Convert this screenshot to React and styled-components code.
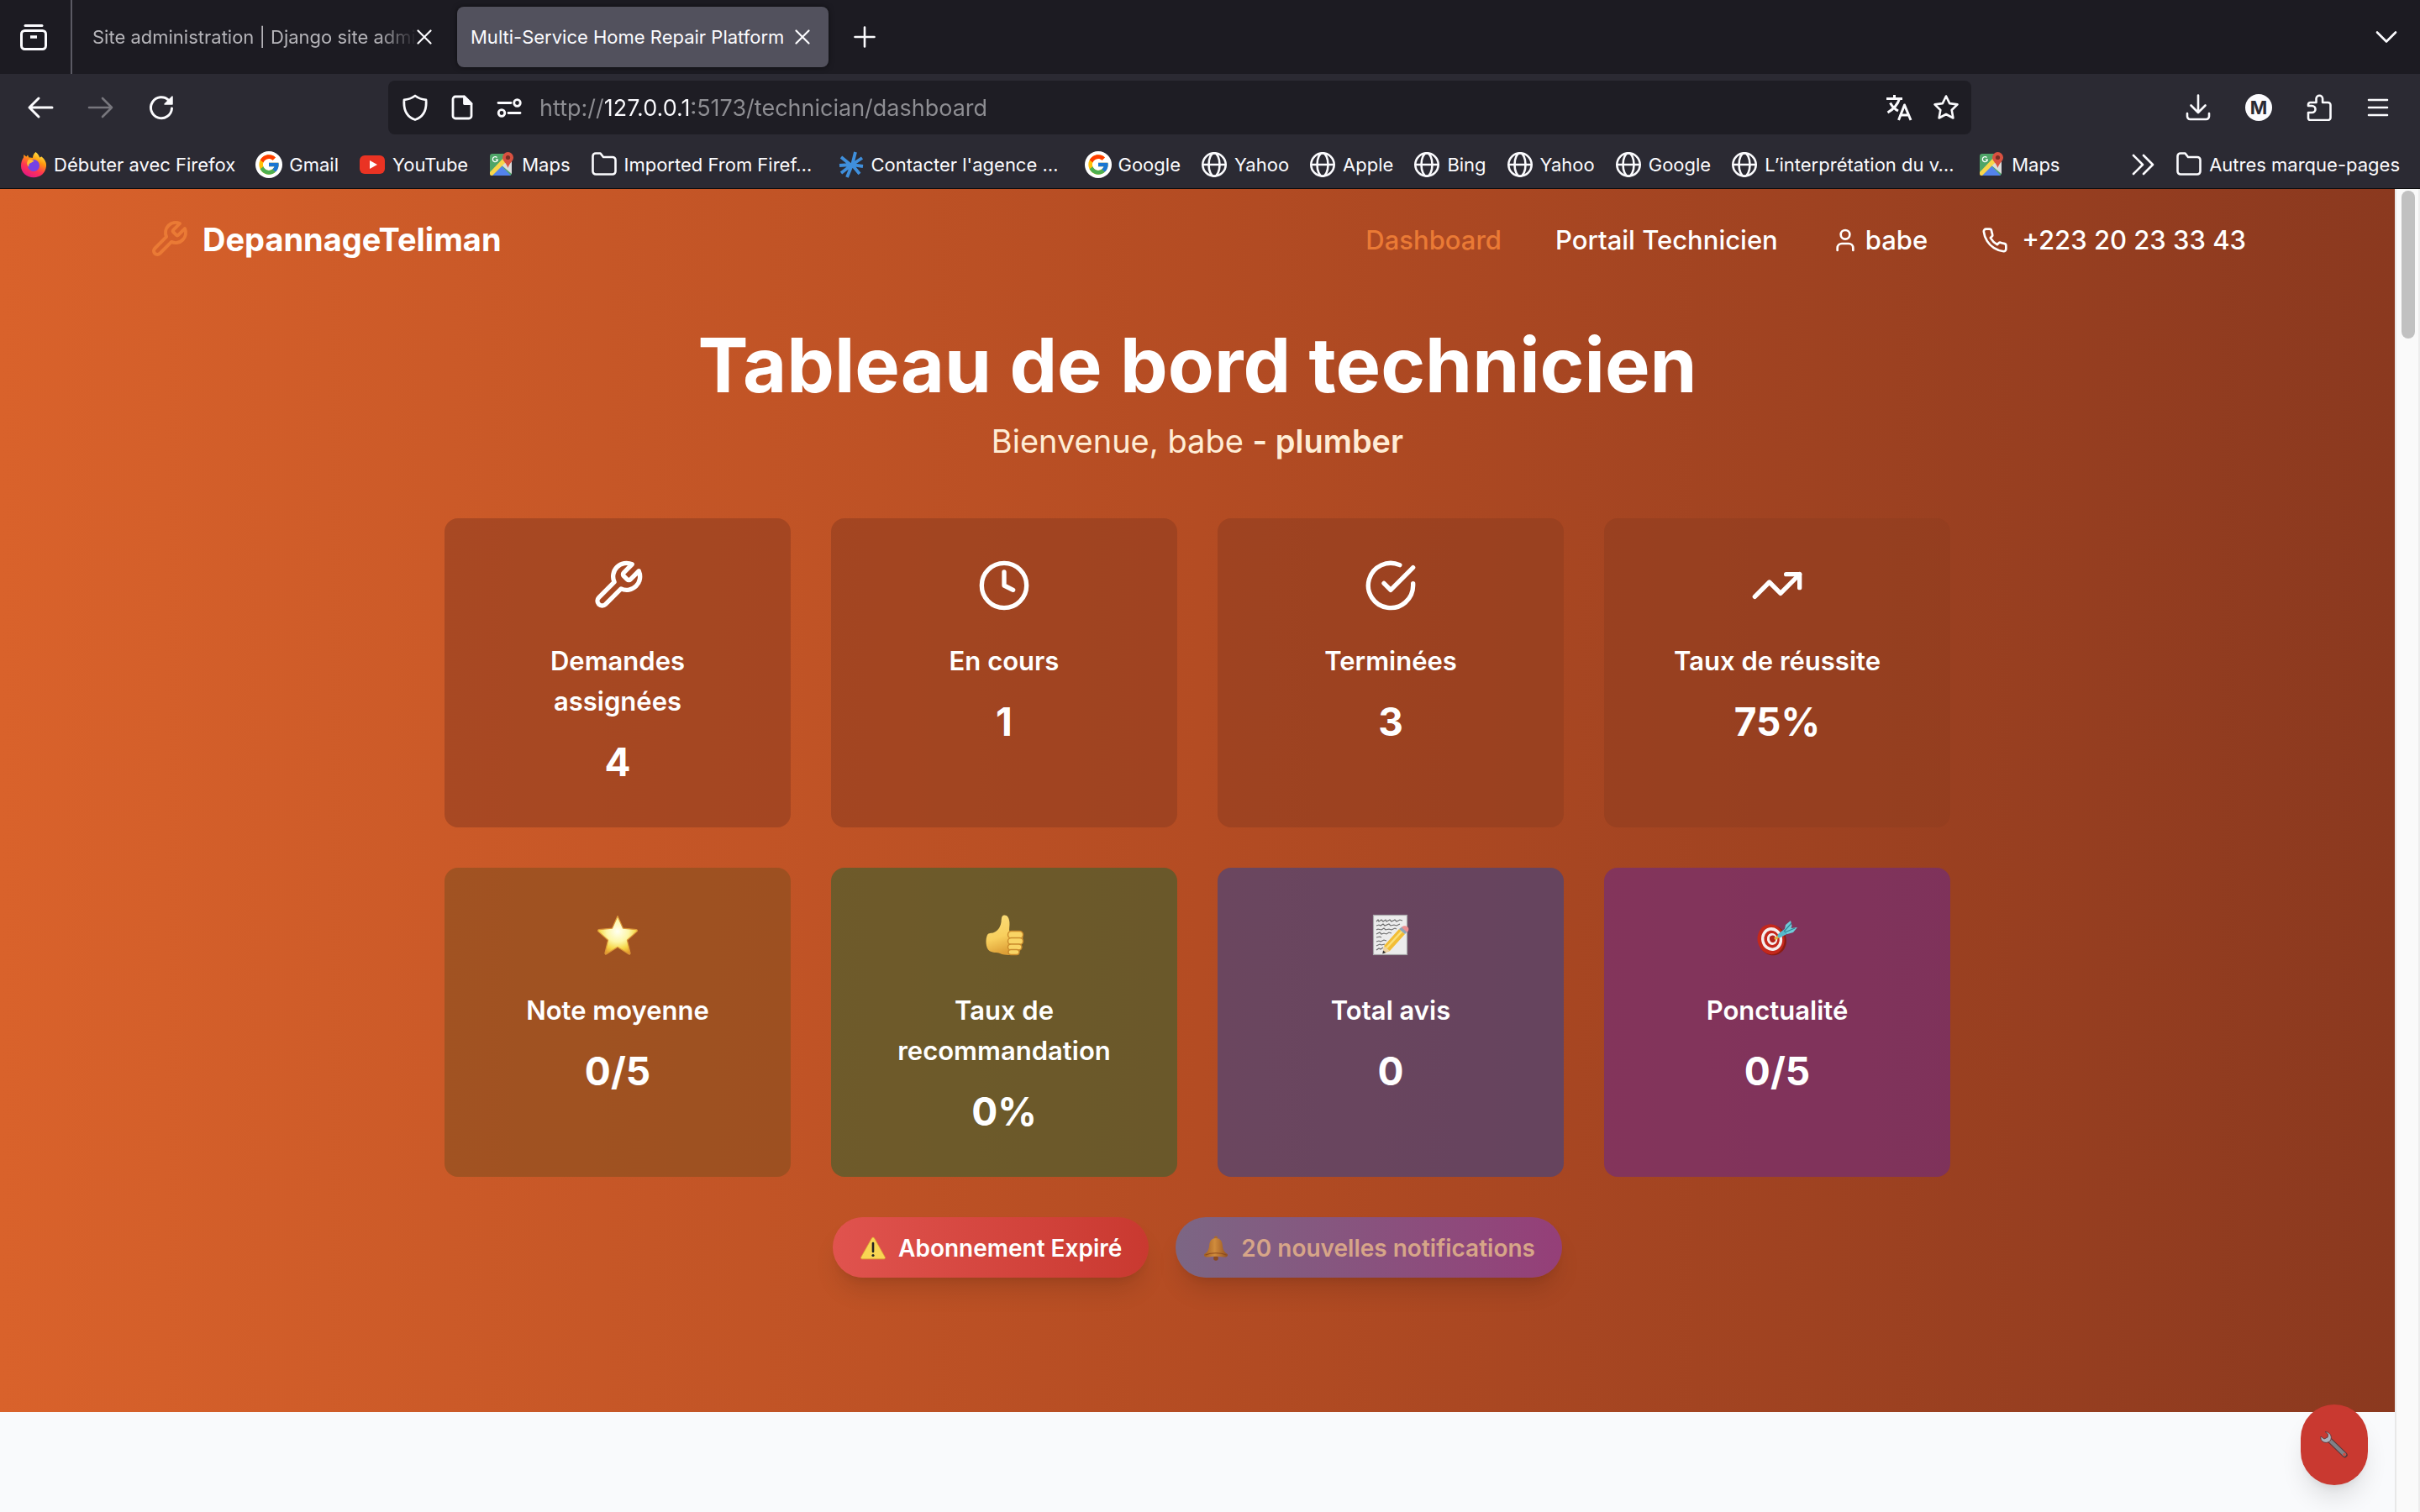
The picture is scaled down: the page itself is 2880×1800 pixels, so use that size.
import React from "react";
import styled, { createGlobalStyle } from "styled-components";
import { FcGoogle } from "react-icons/fc";

const GlobalStyle = createGlobalStyle`
  *, *::before, *::after { box-sizing: border-box; }
  body {
    margin: 0;
    font-family: Inter, "Liberation Sans", sans-serif;
    -webkit-font-smoothing: antialiased;
  }
  button, input { font: inherit; color: inherit; }
  button { border: 0; padding: 0; background: none; cursor: pointer; }
  a { color: inherit; text-decoration: none; }
  h1, h2, p { margin: 0; }
  svg { display: block; flex: none; }
`;

/* ---------- browser chrome ---------- */

const Browser = styled.div`
  display: flex;
  flex-direction: column;
  height: 100vh;
  background: #2b2a33;
  color: #fbfbfe;
`;

const TabStrip = styled.div`
  display: flex;
  align-items: center;
  height: 88px;
  padding-right: 26px;
  background: #1c1b22;
`;

const FirefoxView = styled.div`
  display: flex;
  align-items: center;
  align-self: stretch;
  padding: 0 26px 0 22px;
  border-right: 2px solid #5b5a64;
`;

const Tab = styled.div`
  display: flex;
  align-items: center;
  justify-content: space-between;
  width: 442px;
  height: 72px;
  margin-left: ${(p) => (p.$active ? "0" : "8px")};
  margin-right: ${(p) => (p.$active ? "30px" : "8px")};
  padding: 0 22px 0 16px;
  border-radius: 8px;
  background: ${(p) => (p.$active ? "#52515d" : "transparent")};
  box-shadow: ${(p) => (p.$active ? "0 0 6px rgba(0, 0, 0, 0.5)" : "none")};
`;

const TabTitle = styled.button`
  flex: 1;
  min-width: 0;
  overflow: hidden;
  white-space: nowrap;
  text-align: left;
  font-size: 22px;
  line-height: 32px;
  color: ${(p) => (p.$active ? "#fbfbfe" : "#b5b4b9")};
  mask-image: ${(p) => (p.$active ? "none" : "linear-gradient(to right, #000 88%, transparent)")};
`;

const Spacer = styled.div`
  flex: 1;
`;

const NavBar = styled.div`
  display: flex;
  align-items: center;
  height: 80px;
  padding: 0 36px 0 32px;
`;

const NavGroup = styled.div`
  display: flex;
  align-items: center;
  gap: 40px;
`;

const UrlBox = styled.form`
  display: flex;
  align-items: center;
  flex: 1;
  height: 64px;
  margin: 0 254px;
  padding: 0 14px 0 16px;
  gap: 24px;
  border-radius: 8px;
  background: #1e1d24;
`;

const UrlInput = styled.input`
  flex: 1;
  min-width: 0;
  margin-left: -4px;
  padding: 2px 0 0;
  border: 0;
  outline: 0;
  font-size: 27px;
  line-height: 40px;
  color: transparent;
  background: linear-gradient(to right, #8e8e93 0 76px, #fbfbfe 76px 182px, #8e8e93 182px);
  background-clip: text;
  -webkit-background-clip: text;
`;

const Account = styled.span`
  display: flex;
  align-items: center;
  justify-content: center;
  width: 32px;
  height: 32px;
  border-radius: 50%;
  background: #fbfbfe;
  color: #2b2a33;
  font-size: 22px;
  font-weight: 700;
`;

const Bookmarks = styled.nav`
  display: flex;
  align-items: center;
  height: 57px;
  padding: 0 24px;
  border-bottom: 1px solid #0c0c0d;
  gap: 24px;
  font-size: 22px;
  line-height: 32px;
  white-space: nowrap;
`;

const Bookmark = styled.a`
  display: flex;
  align-items: center;
  gap: 8px;
  width: ${(p) => (p.$long ? "270px" : "auto")};
`;

const GoogleDisc = styled.span`
  display: flex;
  align-items: center;
  justify-content: center;
  width: 32px;
  height: 32px;
  border-radius: 50%;
  background: #fff;
`;

/* ---------- page ---------- */

const Viewport = styled.div`
  display: flex;
  flex: 1;
  min-height: 0;
`;

const Page = styled.div`
  position: relative;
  flex: 1;
  min-width: 0;
  overflow: hidden;
  background: #f9fafc;
  color: #fff;
`;

const ScrollTrack = styled.div`
  width: 30px;
  padding: 2px 6px 0 6px;
  border-left: 2px solid #e8e8e8;
  border-right: 2px solid #ededed;
  background: #fafafa;
`;

const ScrollThumb = styled.div`
  width: 16px;
  height: 176px;
  border-radius: 8px;
  background: #c1c1c1;
`;

const Hero = styled.section`
  padding-bottom: 160px;
  background: linear-gradient(to right, #d9622b, #b44c23 50%, #8b391f);
`;

const Header = styled.header`
  display: flex;
  align-items: center;
  justify-content: space-between;
  max-width: 2560px;
  height: 120px;
  margin: 0 auto;
  padding: 0 32px;
`;

const Logo = styled.a`
  display: flex;
  align-items: center;
  gap: 16px;
  font-size: 38px;
  font-weight: 700;

  svg { color: #ea7a35; }
`;

const Menu = styled.nav`
  display: flex;
  align-items: center;
  gap: 64px;
  padding-top: 2px;
`;

const MenuLink = styled.a`
  display: flex;
  align-items: center;
  gap: ${(p) => p.$gap || 8}px;
  font-size: 31px;
  line-height: 48px;
  font-weight: 500;
  color: ${(p) => (p.$active ? "#ea7a35" : "#fff")};
`;

const HeroBody = styled.div`
  display: flex;
  flex-direction: column;
  align-items: center;
  padding-top: 42px;
`;

const Title = styled.h1`
  font-size: 90px;
  line-height: 96px;
  font-weight: 700;
`;

const Subtitle = styled.p`
  margin-top: 14px;
  font-size: 38px;
  line-height: 56px;
  color: #ffedd5;

  strong { font-weight: 600; }
`;

const StatGrid = styled.div`
  display: grid;
  grid-template-columns: repeat(4, 1fr);
  gap: 48px;
  width: 100%;
  max-width: 1792px;
  margin-top: 64px;
`;

const StatCard = styled.article`
  display: flex;
  flex-direction: column;
  align-items: center;
  padding: 48px 48px 46px;
  border-radius: 16px;
  background: ${(p) => p.$tint};
  text-align: center;
`;

const StatIcon = styled.div`
  display: flex;
  align-items: center;
  justify-content: center;
  height: 64px;
  margin-bottom: 34px;
`;

const StatLabel = styled.h2`
  font-size: 31px;
  line-height: 48px;
  font-weight: 600;
`;

const StatValue = styled.p`
  margin-top: 16px;
  font-size: 46px;
  line-height: 64px;
  font-weight: 700;
`;

const Badges = styled.div`
  display: flex;
  gap: 32px;
  margin-top: 48px;
`;

const Badge = styled.button`
  display: flex;
  align-items: center;
  gap: 14px;
  padding: 17px 32px 15px;
  border-radius: 36px;
  background: ${(p) => p.$fill};
  color: ${(p) => p.$ink};
  font-size: 28px;
  line-height: 40px;
  font-weight: 600;
  box-shadow: 0 20px 30px -6px rgba(0, 0, 0, 0.12), 0 8px 12px -8px rgba(0, 0, 0, 0.12);
`;

const HelpButton = styled.button`
  position: absolute;
  right: 32px;
  bottom: 32px;
  display: flex;
  align-items: center;
  justify-content: center;
  width: 80px;
  height: 96px;
  border-radius: 40px;
  background: #c93930;
  box-shadow: 0 20px 30px -6px rgba(0, 0, 0, 0.12), 0 8px 12px -8px rgba(0, 0, 0, 0.12);
`;

/* ---------- line icons ---------- */

const Line = ({ size = 32, box = 24, w = 2, children, ...rest }) => (
  <svg width={size} height={size} viewBox={`0 0 ${box} ${box}`} fill="none" stroke="currentColor"
    strokeWidth={w} strokeLinecap="round" strokeLinejoin="round" aria-hidden="true" {...rest}>
    {children}
  </svg>
);

const Wrench = ({ size }) => (
  <Line size={size}>
    <path d="M14.7 6.3a1 1 0 0 0 0 1.4l1.6 1.6a1 1 0 0 0 1.4 0l3.77-3.77a6 6 0 0 1-7.94 7.94l-6.91 6.91a2.12 2.12 0 0 1-3-3l6.91-6.91a6 6 0 0 1 7.94-7.94l-3.76 3.76z" />
  </Line>
);
const Clock = () => (
  <Line size={64}><circle cx="12" cy="12" r="10" /><path d="M12 6v6l4 2" /></Line>
);
const Check = () => (
  <Line size={64}><path d="M22 11.08V12a10 10 0 1 1-5.93-9.14" /><path d="m9 11 3 3L22 4" /></Line>
);
const Trend = () => (
  <Line size={64}><path d="m22 7-8.5 8.5-5-5L2 17" /><path d="M16 7h6v6" /></Line>
);
const User = () => (
  <Line><path d="M19 21v-2a4 4 0 0 0-4-4H9a4 4 0 0 0-4 4v2" /><circle cx="12" cy="7" r="4" /></Line>
);
const Phone = () => (
  <Line>
    <path d="M22 16.92v3a2 2 0 0 1-2.18 2 19.79 19.79 0 0 1-8.63-3.07 19.5 19.5 0 0 1-6-6 19.79 19.79 0 0 1-3.07-8.67A2 2 0 0 1 4.11 2h3a2 2 0 0 1 2 1.72 12.84 12.84 0 0 0 .7 2.81 2 2 0 0 1-.45 2.11L8.09 9.91a16 16 0 0 0 6 6l1.27-1.27a2 2 0 0 1 2.11-.45 12.84 12.84 0 0 0 2.81.7A2 2 0 0 1 22 16.92z" />
  </Line>
);

const ViewIcon = () => (
  <Line size={36} box={36} w={3}>
    <path d="M8 4.500h20" /><rect x="3.500" y="10.500" width="29" height="22" rx="4" /><path d="M14 18h8" strokeWidth="3.500" strokeLinecap="butt" />
  </Line>
);
const Close = () => <Line size={18} box={18} w={2.2}><path d="m1.500 1.500 15 15m0-15-15 15" /></Line>;
const Plus = () => <Line size={26} box={26} w={2.6}><path d="M13 1.500v23M1.500 13h23" /></Line>;
const ChevronDown = () => <Line size={28} box={28} w={2.6}><path d="m3 8.500 11 11 11-11" /></Line>;
const Back = () => <Line box={32} w={3}><path d="M30 16H3M14 5 3 16l11 11" /></Line>;
const Forward = () => <Line box={32} w={2.6} color="#77767d"><path d="M2 16h27M18 5l11 11-11 11" /></Line>;
const Reload = () => (
  <Line box={32} w={3}>
    <path d="M28.500 17A12.500 12.500 0 1 1 25 7.500" /><path d="M29 3v9h-9z" fill="currentColor" strokeWidth="1.500" />
  </Line>
);
const Shield = () => (
  <Line box={32} w={2.8}>
    <path d="M16 2c4 3 8.500 4.500 13 4.800C30 18 26 27 16 30.500 6 27 2 18 3 6.800 7.500 6.500 12 5 16 2z" />
  </Line>
);
const Doc = () => (
  <Line box={32} w={2.8}>
    <path d="M8 3h10.500L27 11.500V26a3 3 0 0 1-3 3H8a3 3 0 0 1-3-3V6a3 3 0 0 1 3-3z" /><path d="M18.500 3v8.500H27z" fill="currentColor" />
  </Line>
);
const Sliders = () => (
  <Line box={32} w={2.8}>
    <path d="M3 10.500h15" /><circle cx="25.500" cy="10.500" r="3.800" /><path d="M29 22.500H15" /><circle cx="7" cy="22.500" r="3.800" />
  </Line>
);
const Translate = () => (
  <Line box={32} w={3} strokeLinecap="butt">
    <path d="M1 5.500h19M10.500 1v4.500M16.500 5.500C14.500 12.500 10 17.500 2.500 22M5.500 10.500c2.500 4.500 5.500 7.500 9.500 9.500" /><path d="m15.500 31 7-18 7.500 18M18 25h9.500" />
  </Line>
);
const Star = () => (
  <Line box={32} w={2.6}>
    <path d="m16 2.500 4.200 8.600 9.300 1.300-6.800 6.600 1.700 9.500L16 24l-8.400 4.500 1.700-9.500-6.800-6.600 9.300-1.300z" />
  </Line>
);
const Download = () => <Line box={32} w={2.6}><path d="M16 1.500v20M7.500 13.500l8.500 8.500 8.500-8.500M3 23v3.500A3.500 3.500 0 0 0 6.500 30h19a3.500 3.500 0 0 0 3.500-3.500V23" /></Line>;
const Puzzle = () => (
  <Line box={32} w={2.6}>
    <path d="M5.500 10h7V5.500a3.800 3.800 0 0 1 7.600 0V10h6.400a3 3 0 0 1 3 3v15a3 3 0 0 1-3 3h-21a2.500 2.500 0 0 1-2.500-2.500v-6.500h4.500a4 4 0 0 0 0-8H3v-1.500A2.500 2.500 0 0 1 5.500 10z" />
  </Line>
);
const Burger = () => <Line size={28} box={28} w={2.6}><path d="M3 5h22M3 14h22M3 23h22" /></Line>;
const Chevrons = () => <Line size={28} box={28} w={2.6}><path d="m2 3 11 11L2 25M14 3l11 11-11 11" /></Line>;
const Folder = () => (
  <Line box={32} w={2.6}>
    <path d="M2.500 6A3.500 3.500 0 0 1 6 2.500h5.500L15 7h11a3.500 3.500 0 0 1 3.500 3.500V24a3.500 3.500 0 0 1-3.500 3.500H6A3.500 3.500 0 0 1 2.500 24z" />
  </Line>
);
const Globe = () => (
  <Line box={32} w={2.6}>
    <circle cx="16" cy="16" r="13.700" /><ellipse cx="16" cy="16" rx="6.500" ry="13.700" /><path d="M2.500 16h27" />
  </Line>
);

/* ---------- coloured marks ---------- */

const Firefox = () => (
  <svg width="32" height="32" viewBox="0 0 32 32" aria-hidden="true">
    <defs>
      <linearGradient id="ffBody" x1="0.800" y1="0" x2="0.300" y2="1">
        <stop offset="0" stopColor="#fff44f" /><stop offset="0.350" stopColor="#ff980e" />
        <stop offset="0.650" stopColor="#ff3750" /><stop offset="1" stopColor="#e31587" />
      </linearGradient>
    </defs>
    <path d="M18.500 1c3 2.500 4.200 4.500 4.600 6.500 1.400-.2 2-1.300 2-1.300C29.500 9.500 31.500 13.500 31 18c-.8 8-7 13.300-15 13.300S1 25.500 1 17.500C1 13.500 2.200 10 4 7.500L4.300 4l3 2.500L9 4.500l1.500 3c2 0 4 .3 4.500.5C15 5 16.500 2.500 18.500 1z" fill="url(#ffBody)" />
    <circle cx="16" cy="17" r="7" fill="#7542e5" />
    <path d="M10 10c3-.5 5 .5 6.500 2-2 .5-2.500 1.500-4.500 2.200-1.500.6-2 2.300-1.500 4.300C7.500 17 7.500 12.500 10 10z" fill="#ffbd2f" />
  </svg>
);
const YouTube = () => (
  <svg width="32" height="32" viewBox="0 0 32 32" aria-hidden="true">
    <rect x="1" y="5" width="30" height="22" rx="6" fill="#ea3323" /><path d="m13 11 9 5-9 5z" fill="#fff" />
  </svg>
);
const MapsMark = () => (
  <svg width="32" height="32" viewBox="0 0 32 32" aria-hidden="true">
    <rect x="2" y="3" width="26" height="26" rx="3" fill="#4fa568" />
    <path d="M28 10v17L15 16z" fill="#dcdcdc" /><path d="M4 29 15.500 17 27 29z" fill="#5383ec" />
    <path d="M2 25 22 4l4 4L5 29H4a2 2 0 0 1-2-2z" fill="#f8d64b" />
    <path d="M10.500 7.500a3 3 0 1 0 .8 2.600H8.800" fill="none" stroke="#fff" strokeWidth="1.300" />
    <path d="M23.500 1a6.500 6.500 0 0 1 6.500 6.500c0 4.500-5 6.500-6.500 12.500-1.500-6-6.500-8-6.500-12.500A6.500 6.500 0 0 1 23.500 1z" fill="#d85140" />
    <circle cx="23.500" cy="7.500" r="2.600" fill="#7a2e24" />
  </svg>
);
const Spark = () => (
  <Line box={32} w={3.8} color="#3f8fdc"><path d="M21 1 17.500 15 11 31M4 7l11 9M29 8l-12 8-13 10M2 17l14-1 14 2M17 16l9 11" strokeLinecap="butt" /></Line>
);
const GoogleMark = () => <GoogleDisc><FcGoogle size={28} aria-hidden="true" /></GoogleDisc>;

const StarEmoji = () => (
  <svg width="50" height="50" viewBox="0 0 50 50" aria-hidden="true">
    <defs>
      <radialGradient id="starFill" cx="0.500" cy="0.400" r="0.620">
        <stop offset="0" stopColor="#fffff2" /><stop offset="0.450" stopColor="#fdf7a8" />
        <stop offset="0.750" stopColor="#f6d748" /><stop offset="1" stopColor="#e59a2c" />
      </radialGradient>
    </defs>
    <path d="m25 2.500 6.400 14.600 15.900 1.600c1.200.2 1.600 1.400.7 2.200L36.400 31.200l3.600 15.400c.2 1.200-.8 1.800-1.800 1.200L25 39.600l-13.200 8.200c-1 .6-2 0-1.800-1.200l3.600-15.400L2 20.900c-.9-.8-.5-2 .7-2.200l15.900-1.600z" fill="url(#starFill)" stroke="#dc9738" strokeWidth="1.200" strokeLinejoin="round" />
  </svg>
);
const ThumbEmoji = () => (
  <svg width="50" height="50" viewBox="0 0 50 50" aria-hidden="true">
    <defs>
      <linearGradient id="thumbFill" x1="0" y1="0" x2="0.300" y2="1">
        <stop offset="0" stopColor="#fbdf7c" /><stop offset="0.600" stopColor="#f8cf5d" /><stop offset="1" stopColor="#dd9f36" />
      </linearGradient>
    </defs>
    <path d="M25 1.500c3.600-.4 6 3 6.400 8.500.3 4-.6 7.500-.2 10.500L40 21c8 .5 8.500 9 6 13-1 6-2 13.500-8 14.500-6 .8-13 .8-18-1.500-3-1.300-9-.5-12.500-3C3 41 2.500 30 5 25c1.600-2.800 4.500-1.500 8-3 5.500-2.500 8-7.500 8.600-13 .3-4 .4-7.200 3.400-7.500z" fill="url(#thumbFill)" />
    <g fill="#f9d465" stroke="#c98a2c" strokeWidth="1.400">
      <rect x="29.500" y="20.500" width="18" height="8.500" rx="4.200" /><rect x="29.500" y="28.500" width="18" height="8" rx="4" />
      <rect x="29.500" y="36" width="16.500" height="7" rx="3.500" /><rect x="30" y="42.500" width="13" height="6" rx="3" />
    </g>
  </svg>
);
const MemoEmoji = () => (
  <svg width="50" height="50" viewBox="0 0 50 50" aria-hidden="true">
    <rect x="4.500" y="1.500" width="40" height="47" fill="#ececec" stroke="#a9a9ab" strokeWidth="1.200" />
    <g fill="none" stroke="#6c6c6c" strokeWidth="1.100">
      <path d="m8 9 2-2 1 2 3-2 2 2 3-2 1 2 4-2 2 2 4-2 2 2 4-2 3 1" /><path d="m8 14 3-1 2 1 3-2 2 2 5-2 2 2 4-1 3 1 4-2" />
      <path d="m8 19 2-1 4 1 3-2 2 2 4-1 3 1 4-2 2 1" /><path d="m8 24 4-2 2 2 3-1 3 1 3-2 3 1" />
      <path d="m8 28 4-1 2 1" /><path d="m8 33 3-1 2 1 4-2 3 1" /><path d="m8 38 4-2 2 1 4-1" /><path d="m8 43 3-2 2 1 3-2" />
    </g>
    <path d="m17 38 18-20 7 6-18 20-7.500 3z" fill="#f2bd35" /><path d="m20 40.500 18.500-20" stroke="#fbe078" strokeWidth="2.500" />
    <path d="m35 18 4-3 6.500 5.500L42 24z" fill="#8fa6b5" /><path d="M38 16c3-3.500 10-1 8 4l-1.500 2z" fill="#ec8f91" />
    <path d="m17 38-1.500 9L24 44z" fill="#edd4a4" /><path d="m16 43.500-.7 4 4-1.500z" fill="#333" />
  </svg>
);
const DartEmoji = () => (
  <svg width="50" height="50" viewBox="0 0 50 50" aria-hidden="true">
    <g transform="rotate(-12 19 32)">
      <ellipse cx="19.500" cy="31.500" rx="16.500" ry="18" fill="#8b1c12" /><ellipse cx="18" cy="30" rx="16" ry="18" fill="#c4281c" />
      <ellipse cx="19" cy="30" rx="12.500" ry="14" fill="#f6eeee" /><ellipse cx="19" cy="30" rx="9.200" ry="10.400" fill="#c4281c" />
      <ellipse cx="19.500" cy="30" rx="6.200" ry="7" fill="#f6eeee" /><ellipse cx="20" cy="30" rx="3.600" ry="4.200" fill="#b3241a" />
    </g>
    <path d="m22 30 6-4" stroke="#e3b43c" strokeWidth="3" /><path d="m26 24 9-7 5 5-11 6c-3 1-4.500-1-3-4z" fill="#56b9cb" />
    <path d="m34 18 1-5 6-5 1.500 6-1 3 7.500-1-5 6-7 2z" fill="#6fcbd9" /><path d="m33 21 9-10M34 22l12-5" stroke="#2f8798" strokeWidth="1.200" />
  </svg>
);
const WarnEmoji = () => (
  <svg width="32" height="32" viewBox="0 0 32 32" aria-hidden="true">
    <path d="M14.500 4c.7-1.200 2.300-1.200 3 0l12.700 22.500c.7 1.200 0 2.300-1.300 2.300H3.100c-1.300 0-2-1.100-1.300-2.300z" fill="#f9d553" stroke="#dba834" strokeWidth="0.800" />
    <path d="M16 10v10" stroke="#222" strokeWidth="2.600" strokeLinecap="round" /><circle cx="16" cy="24.500" r="1.600" fill="#222" />
  </svg>
);
const BellEmoji = () => (
  <svg width="32" height="32" viewBox="0 0 32 32" aria-hidden="true">
    <defs>
      <linearGradient id="bellFill" x1="0" x2="1">
        <stop offset="0" stopColor="#a35f22" /><stop offset="0.450" stopColor="#d08c3c" /><stop offset="1" stopColor="#94501f" />
      </linearGradient>
    </defs>
    <circle cx="16" cy="3.500" r="2" fill="#ab6a2a" /><circle cx="16" cy="28" r="2.800" fill="#8c4a1e" />
    <path d="M16 4c4.800 0 7.300 3 7.800 8 .4 5 1.700 8.500 6 11 1 3-2 4-5 3.500-5-1-12.600-1-17.600 0-3 .5-6-.5-5-3.500 4.300-2.500 5.600-6 6-11 .5-5 3-8 7.800-8z" fill="url(#bellFill)" />
    <path d="M3.500 24c7-3 18-3 25 0" fill="none" stroke="#8c4a1e" strokeWidth="1.200" />
  </svg>
);
const WrenchEmoji = () => (
  <svg width="36" height="36" viewBox="0 0 36 36" aria-hidden="true">
    <path d="m13 13 17.500 17" stroke="#5d3638" strokeWidth="6.500" strokeLinecap="round" />
    <path d="m13 13 17 16.500" stroke="#7f8188" strokeWidth="4.500" strokeLinecap="round" />
    <path d="M7 2.500c5 0 8.500 4.500 7 9-1.500 4-6.500 5-10 2.500C2 12.500 1.500 10 2 8l4 3 4-2 .5-3.500z" fill="#a9b3bd" stroke="#6b3a3c" strokeWidth="1" />
    <circle cx="30" cy="29.500" r="1.700" fill="#d9473d" />
  </svg>
);

/* ---------- data ---------- */

const bookmarks = [
  [Firefox, "Débuter avec Firefox"],
  [GoogleMark, "Gmail"],
  [YouTube, "YouTube"],
  [MapsMark, "Maps"],
  [Folder, "Imported From Firef…", true],
  [Spark, "Contacter l'agence …", true],
  [GoogleMark, "Google"],
  [Globe, "Yahoo"],
  [Globe, "Apple"],
  [Globe, "Bing"],
  [Globe, "Yahoo"],
  [Globe, "Google"],
  [Globe, "L’interprétation du v…", true],
  [MapsMark, "Maps"],
];

const ORANGE = "rgba(145, 61, 32, 0.6)";

const stats = [
  { icon: <Wrench size={64} />, label: "Demandes assignées", value: "4", tint: ORANGE },
  { icon: <Clock />, label: "En cours", value: "1", tint: ORANGE },
  { icon: <Check />, label: "Terminées", value: "3", tint: ORANGE },
  { icon: <Trend />, label: "Taux de réussite", value: "75%", tint: ORANGE },
  { icon: <StarEmoji />, label: "Note moyenne", value: "0/5", tint: "rgba(133, 79, 30, 0.6)" },
  { icon: <ThumbEmoji />, label: "Taux de recommandation", value: "0%", tint: "rgba(56, 97, 47, 0.6)" },
  { icon: <MemoEmoji />, label: "Total avis", value: "0", tint: "rgba(58, 66, 135, 0.6)" },
  { icon: <DartEmoji />, label: "Ponctualité", value: "0/5", tint: "rgba(108, 42, 130, 0.6)" },
];

export default function App() {
  return (
    <Browser>
      <GlobalStyle />
      <TabStrip>
        <FirefoxView><button aria-label="Firefox View"><ViewIcon /></button></FirefoxView>
        <Tab>
          <TabTitle>Site administration | Django site admin</TabTitle>
          <button aria-label="Fermer l’onglet"><Close /></button>
        </Tab>
        <Tab $active>
          <TabTitle $active>Multi-Service Home Repair Platform</TabTitle>
          <button aria-label="Fermer l’onglet"><Close /></button>
        </Tab>
        <button aria-label="Nouvel onglet"><Plus /></button>
        <Spacer />
        <button aria-label="Lister les onglets"><ChevronDown /></button>
      </TabStrip>

      <NavBar>
        <NavGroup>
          <button aria-label="Précédent"><Back /></button>
          <button aria-label="Suivant"><Forward /></button>
          <button aria-label="Actualiser"><Reload /></button>
        </NavGroup>
        <UrlBox onSubmit={(e) => e.preventDefault()}>
          <Shield />
          <Doc />
          <Sliders />
          <UrlInput aria-label="Adresse" defaultValue="http://127.0.0.1:5173/technician/dashboard" />
          <button type="button" aria-label="Traduire"><Translate /></button>
          <button type="button" aria-label="Marquer cette page"><Star /></button>
        </UrlBox>
        <NavGroup>
          <button aria-label="Téléchargements"><Download /></button>
          <button aria-label="Compte"><Account>M</Account></button>
          <button aria-label="Extensions"><Puzzle /></button>
          <button aria-label="Menu"><Burger /></button>
        </NavGroup>
      </NavBar>

      <Bookmarks aria-label="Marque-pages">
        {bookmarks.map(([Icon, label, long], i) => (
          <Bookmark href="#" key={i} $long={long}><Icon />{label}</Bookmark>
        ))}
        <Spacer />
        <button aria-label="Plus de marque-pages"><Chevrons /></button>
        <Bookmark href="#"><Folder />Autres marque-pages</Bookmark>
      </Bookmarks>

      <Viewport>
        <Page>
          <Hero>
            <Header>
              <Logo href="#"><Wrench size={48} />DepannageTeliman</Logo>
              <Menu>
                <MenuLink href="#" $active>Dashboard</MenuLink>
                <MenuLink href="#">Portail Technicien</MenuLink>
                <MenuLink href="#"><User />babe</MenuLink>
                <MenuLink href="#" $gap={16}><Phone />+223 20 23 33 43</MenuLink>
              </Menu>
            </Header>
            <HeroBody>
              <Title>Tableau de bord technicien</Title>
              <Subtitle>Bienvenue, babe <strong>- plumber</strong></Subtitle>
              <StatGrid>
                {stats.map((s) => (
                  <StatCard key={s.label} $tint={s.tint}>
                    <StatIcon>{s.icon}</StatIcon>
                    <StatLabel>{s.label}</StatLabel>
                    <StatValue>{s.value}</StatValue>
                  </StatCard>
                ))}
              </StatGrid>
              <Badges>
                <Badge $fill="linear-gradient(to right, #e0534e, #c93930)" $ink="#fff">
                  <WarnEmoji />Abonnement Expiré
                </Badge>
                <Badge $fill="linear-gradient(to right, #7c6684, #953f78)" $ink="#d7a588">
                  <BellEmoji />20 nouvelles notifications
                </Badge>
              </Badges>
            </HeroBody>
          </Hero>
          <HelpButton aria-label="Assistance"><WrenchEmoji /></HelpButton>
        </Page>
        <ScrollTrack><ScrollThumb /></ScrollTrack>
      </Viewport>
    </Browser>
  );
}
